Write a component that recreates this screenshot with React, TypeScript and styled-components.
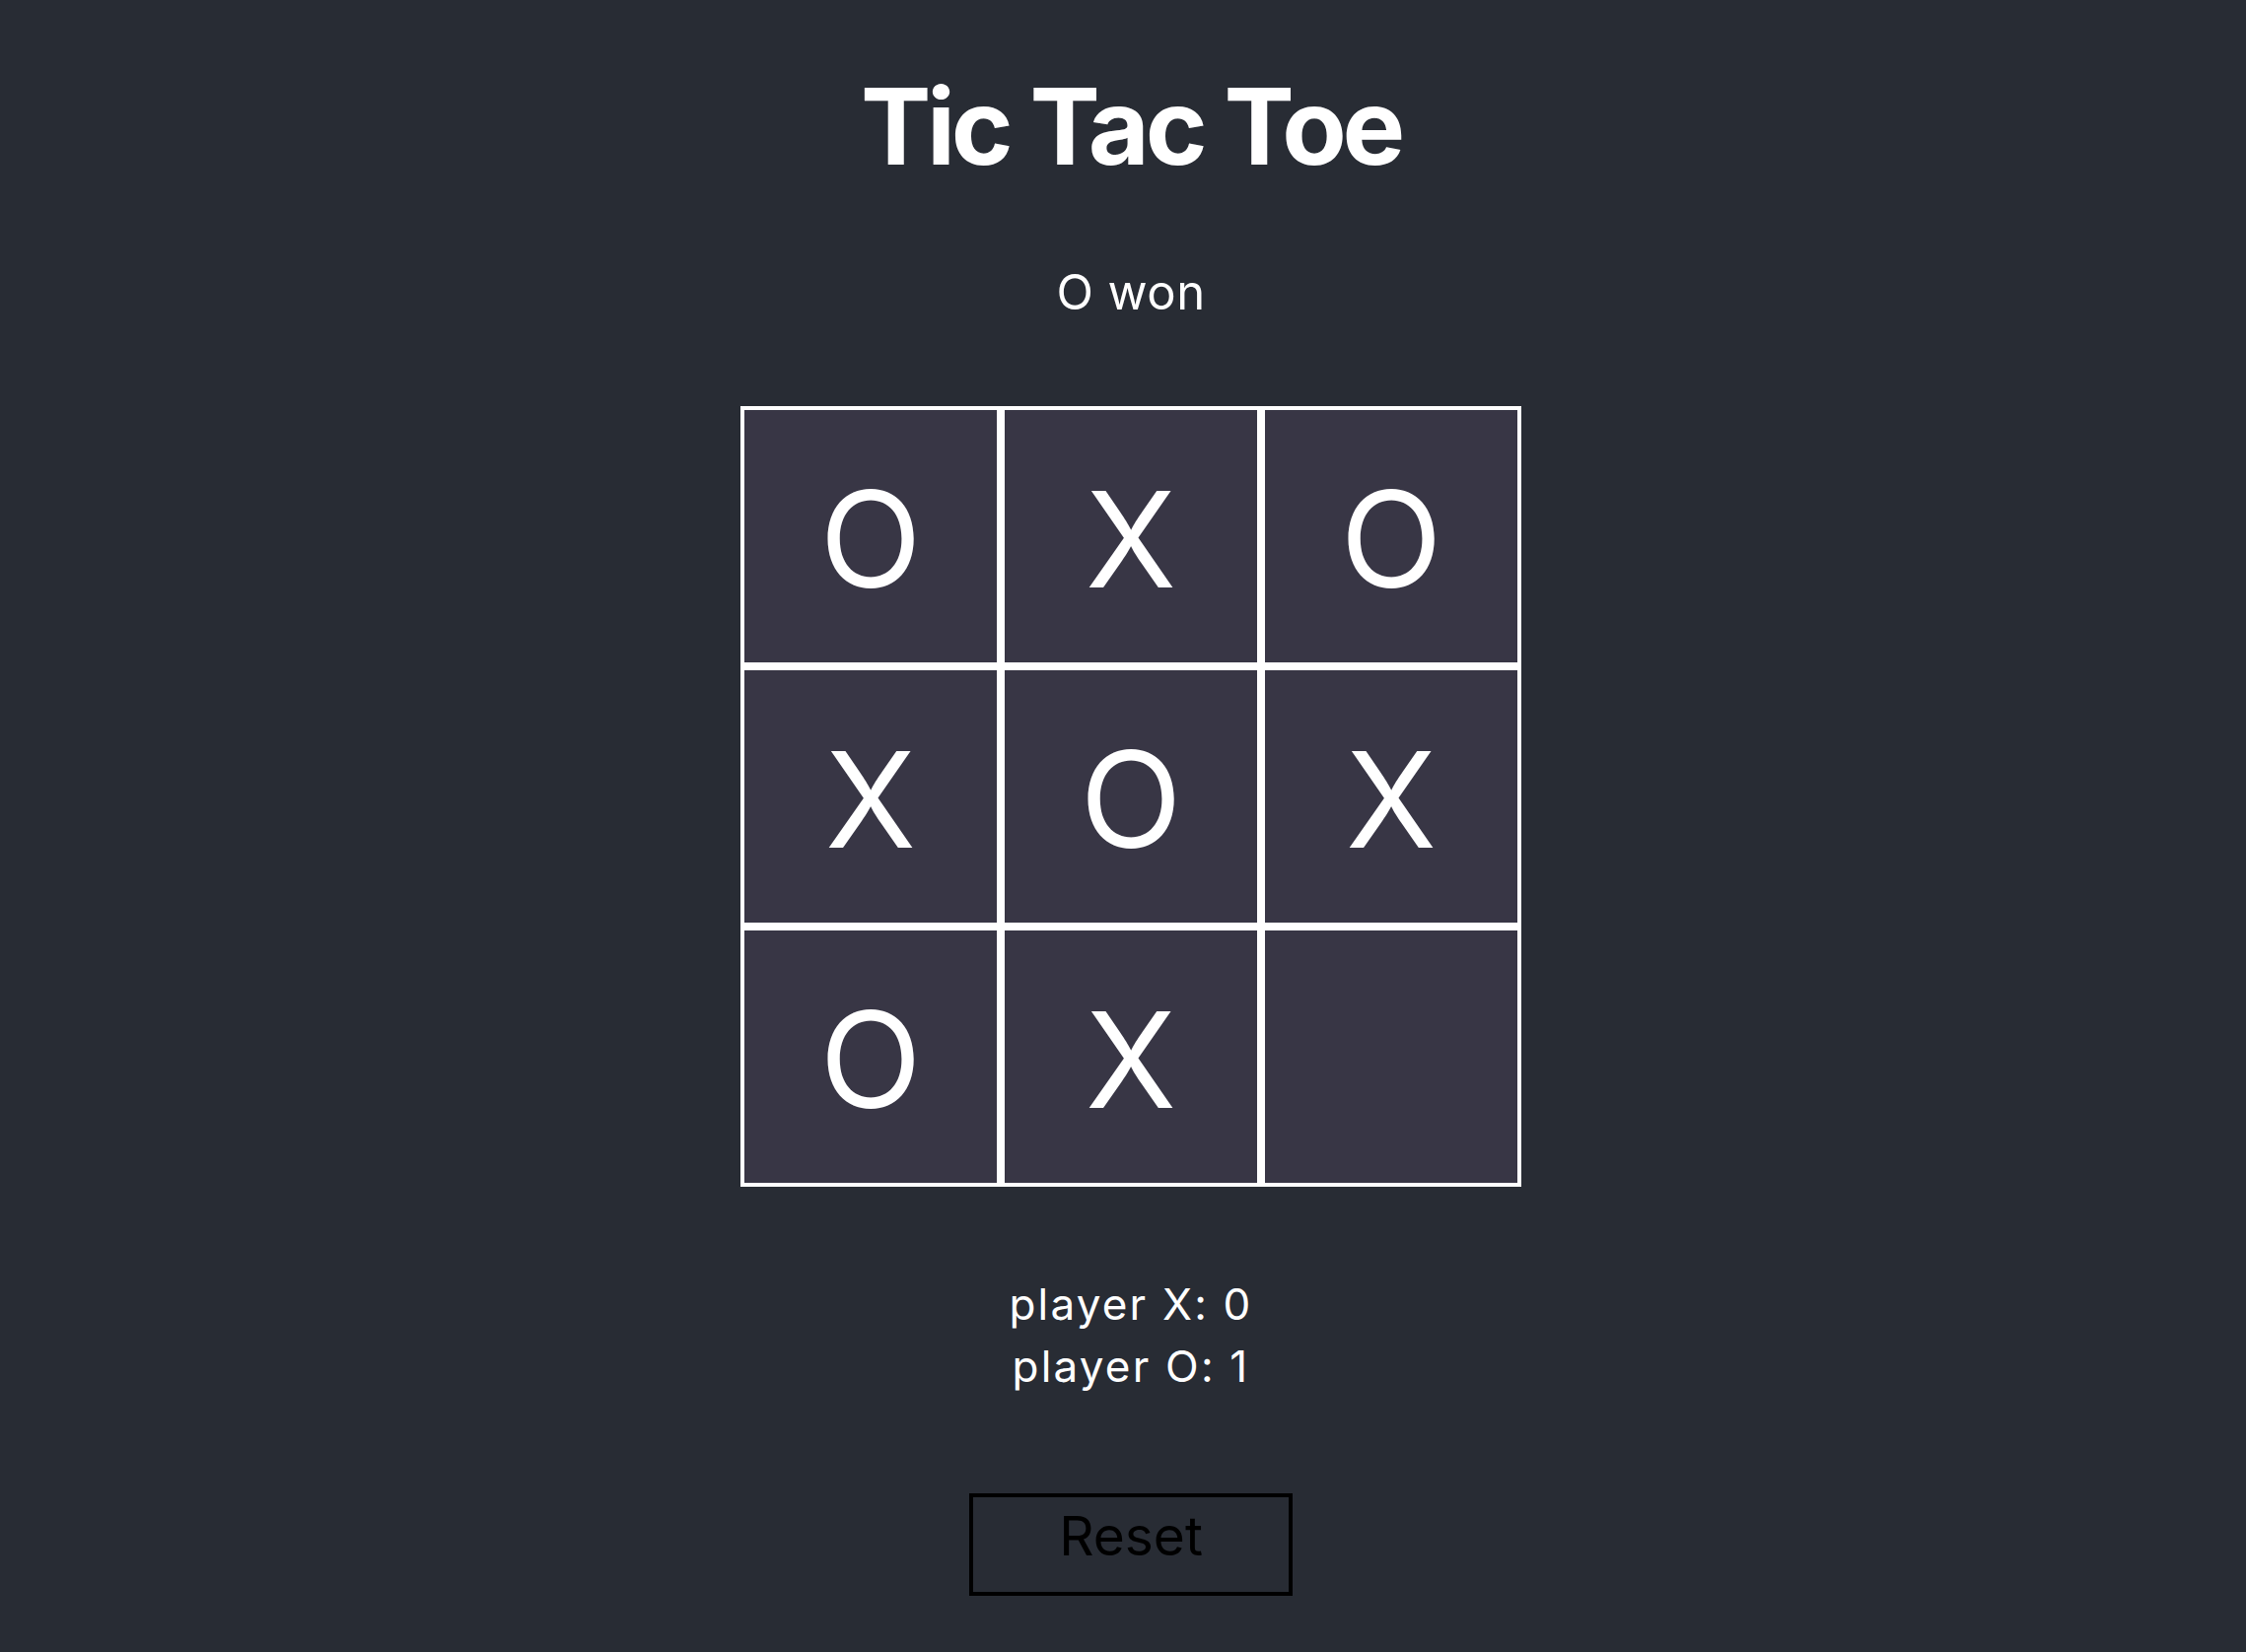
import React from "react";
import styled, { createGlobalStyle } from "styled-components";

const GlobalStyle = createGlobalStyle`
  html, body {
    margin: 0;
    padding: 0;
    background: #282c34;
  }
  body {
    font-family: Inter, "Noto Sans", "Liberation Sans", sans-serif;
    color: #ffffff;
  }
  * { box-sizing: border-box; }
`;

const Page = styled.div`
  width: 100%;
  min-height: 1676px;
  padding: 63px 0 0 16px;
  display: flex;
  flex-direction: column;
  align-items: center;
  background: #282c34;
`;

const Title = styled.h1`
  margin: 0;
  font-size: 107px;
  line-height: 130px;
  font-weight: 700;
  letter-spacing: -0.04em;
  color: #ffffff;
`;

const Status = styled.div`
  margin-top: 74px;
  font-size: 49px;
  line-height: 60px;
  font-weight: 400;
  letter-spacing: 0.01em;
`;

const Board = styled.div`
  margin-top: 85px;
  display: grid;
  grid-template-columns: repeat(3, 264px);
  grid-template-rows: repeat(3, 264px);
`;

const Cell = styled.div`
  border: 4px solid #ffffff;
  background: #383645;
  display: flex;
  align-items: center;
  justify-content: center;
  padding-top: 6px;
  font-size: 135px;
  line-height: 1;
  font-weight: 400;
  color: #ffffff;
`;

const Scores = styled.div`
  margin-top: 88px;
  display: flex;
  flex-direction: column;
  align-items: center;
`;

const ScoreLine = styled.div`
  font-size: 44px;
  line-height: 63px;
  letter-spacing: 0.05em;
`;

const ResetButton = styled.button`
  margin-top: 97px;
  width: 328px;
  height: 104px;
  border: 4px solid #000000;
  background: transparent;
  color: #000000;
  font-family: Inter, "Noto Sans", "Liberation Sans", sans-serif;
  font-size: 55px;
  line-height: 66px;
  padding: 6px 0 24px;
  cursor: pointer;
`;

const cells = ["O", "X", "O", "X", "O", "X", "O", "X", ""];

export default function App() {
  return (
    <>
      <GlobalStyle />
      <Page>
        <Title>Tic Tac Toe</Title>
        <Status>O won</Status>
        <Board>
          {cells.map((v, i) => (
            <Cell key={i}>{v}</Cell>
          ))}
        </Board>
        <Scores>
          <ScoreLine>player X: 0</ScoreLine>
          <ScoreLine>player O: 1</ScoreLine>
        </Scores>
        <ResetButton>Reset</ResetButton>
      </Page>
    </>
  );
}
